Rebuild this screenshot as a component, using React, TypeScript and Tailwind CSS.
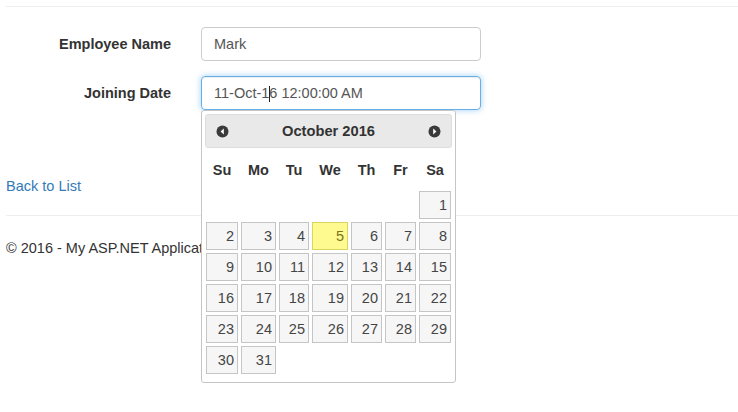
import React from "react";

const font = { fontFamily: '"Liberation Sans", Arial, Helvetica, sans-serif' };

const rows: (number | null)[][] = [
  [null, null, null, null, null, null, 1],
  [2, 3, 4, 5, 6, 7, 8],
  [9, 10, 11, 12, 13, 14, 15],
  [16, 17, 18, 19, 20, 21, 22],
  [23, 24, 25, 26, 27, 28, 29],
  [30, 31, null, null, null, null, null],
];

const names = ["Su", "Mo", "Tu", "We", "Th", "Fr", "Sa"];

function Arrow({ dir }: { dir: "l" | "r" }) {
  return (
    <svg width="13" height="13" viewBox="0 0 13 13">
      <circle cx="6.5" cy="6.5" r="6" fill="#3a3a3a" />
      {dir === "l" ? (
        <polygon points="7.8,3.6 7.8,9.4 4.6,6.5" fill="#ffffff" />
      ) : (
        <polygon points="5.2,3.6 5.2,9.4 8.4,6.5" fill="#ffffff" />
      )}
    </svg>
  );
}

export default function App() {
  return (
    <div className="relative w-[738px] h-[412px] bg-white overflow-hidden text-[14px] text-[#333]" style={font}>
      <div className="px-[6px] pt-[6px]">
        <div className="h-px bg-[#eeeeee] w-[800px]" />
        <div className="mt-[20px] flex flex-col gap-[15px]">
          <div className="flex items-center">
            <div className="w-[165px] pt-[2px] text-right font-bold text-[14.5px] text-[#333]">Employee Name</div>
            <div className="ml-[30px] w-[280px] h-[34px] pt-[2px] rounded-[4px] border border-[#cccccc] flex items-center px-[12px] text-[#555] text-[14.5px]">
              Mark
            </div>
          </div>
          <div className="flex items-center">
            <div className="w-[165px] pt-[2px] text-right font-bold text-[14.5px] text-[#333]">Joining Date</div>
            <div className="ml-[30px] w-[280px] h-[34px] pt-[2px] rounded-[4px] border border-[#66afe9] shadow-[inset_0_1px_1px_rgba(0,0,0,0.075),0_0_6px_rgba(102,175,233,0.6)] flex items-center px-[12px] text-[#555] text-[14.5px]">
              <span>11-Oct-1</span>
              <span className="inline-block w-px h-[16px] bg-[#222] -mr-px" />
              <span>6 12:00:00 AM</span>
            </div>
          </div>
        </div>
        <div className="mt-[66px] text-[#337ab7] text-[14.5px] leading-[20px]">Back to List</div>
        <div className="mt-[19px] h-px bg-[#eeeeee] w-[800px]" />
        <div className="mt-[22px] text-[14.5px] leading-[20px] text-[#333]">© 2016 - My ASP.NET Application</div>
      </div>

      {/* Datepicker popup */}
      <div className="absolute left-[201px] top-[110px] w-[255px] h-[273px] bg-white border border-[#c5c5c5] rounded-[3px] p-[3px] text-[#333]">
        <div className="h-[34px] bg-[#e9e9e9] border border-[#dddddd] rounded-[3px] flex items-center justify-between px-[10px]">
          <Arrow dir="l" />
          <div className="font-bold text-[14.7px] text-[#333]">October 2016</div>
          <Arrow dir="r" />
        </div>
        <div className="ml-[1px] grid grid-cols-[32px_35px_30px_36px_31px_31px_32px] gap-x-[3px] h-[43px] pt-[2px] items-center">
          {names.map((n) => (
            <div key={n} className="text-center font-bold text-[14.5px] text-[#333]">
              {n}
            </div>
          ))}
        </div>
        <div className="ml-[1px] grid grid-cols-[32px_35px_30px_36px_31px_31px_32px] gap-[3px]">
          {rows.flat().map((d, i) =>
            d === null ? (
              <div key={i} className="h-[28px]" />
            ) : d === 5 ? (
              <div
                key={i}
                className="h-[28px] border border-[#dad55e] bg-[#fffa90] text-[#777620] pt-px pr-[3px] flex items-center justify-end text-[14.5px]"
              >
                {d}
              </div>
            ) : (
              <div
                key={i}
                className="h-[28px] border border-[#c5c5c5] bg-[#f6f6f6] text-[#454545] pt-px pr-[3px] flex items-center justify-end text-[14.5px]"
              >
                {d}
              </div>
            )
          )}
        </div>
      </div>
    </div>
  );
}
